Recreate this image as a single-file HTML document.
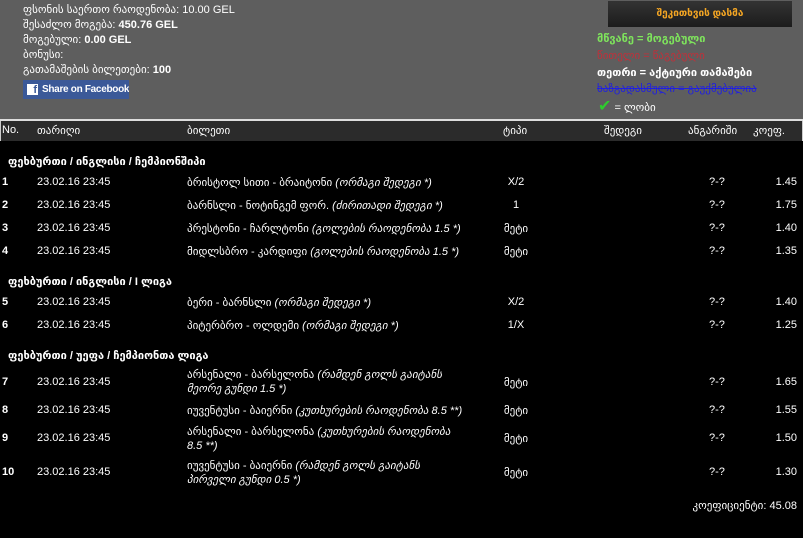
<!DOCTYPE html>
<html><head><meta charset="utf-8"><style>
*{margin:0;padding:0;box-sizing:border-box}
body{width:803px;height:538px;background:#000;color:#fff;font-family:"Liberation Sans","DejaVu Sans",sans-serif;font-size:11px;position:relative;overflow:hidden}
.top{position:absolute;left:0;top:0;width:803px;height:119px;background:#5e5e5e}
.a{position:absolute;white-space:nowrap}
.line{position:absolute;left:0;top:119px;width:803px;height:2px;background:#ddd}
.hdr{position:absolute;left:0;top:121px;width:803px;height:20px;background:#2b2b2b;border-left:1px solid #ccc;border-right:1px solid #ccc}
b{font-weight:bold}
i{font-style:italic}
.fb{position:absolute;left:23px;top:80px;width:106px;height:19px;background:#3b5998;color:#fff;font-weight:bold;font-size:10px;line-height:19px;padding-left:19px;white-space:nowrap;overflow:hidden;letter-spacing:-0.3px}
.fb span{position:absolute;left:4px;top:4px;width:11px;height:11px;background:#fff;color:#3b5998;font-size:11px;line-height:13px;text-align:right;padding-right:1px;font-weight:bold;letter-spacing:0}
.btn{position:absolute;left:608px;top:1px;width:184px;height:26px;background:linear-gradient(#333,#1c1c1c);color:#f5a623;font-weight:bold;font-size:10px;text-align:center;line-height:26px}
.r{position:absolute;font-size:11px;white-space:nowrap}
.n{font-weight:bold}
.c{text-align:center}
</style></head><body>
<div class="top"></div>
<div class="a" style="left:23px;top:3px">ფსონის საერთო რაოდენობა: 10.00 GEL</div>
<div class="a" style="left:23px;top:18px">შესაძლო მოგება: <b>450.76 GEL</b></div>
<div class="a" style="left:23px;top:33px">მოგებული: <b>0.00 GEL</b></div>
<div class="a" style="left:23px;top:48px">ბონუსი:</div>
<div class="a" style="left:23px;top:63px">გათამაშების ბილეთები: <b>100</b></div>
<div class="fb"><span>f</span>Share on Facebookl</div>
<div class="btn">შეკითხვის დასმა</div>
<div class="a" style="left:597px;top:32px;color:#7ee35c;font-weight:bold">მწვანე = მოგებული</div>
<div class="a" style="left:597px;top:49px;color:#c0303a">წითელი = წაგებული</div>
<div class="a" style="left:597px;top:66px;font-weight:bold">თეთრი = აქტიური თამაშები</div>
<div class="a" style="left:597px;top:82px;color:#2020e0;text-decoration:line-through">ხაზგადასმული = გაუქმებულია</div>
<div class="a" style="left:598px;top:96px"><span style="color:#2ecc2e;font-size:16px;font-weight:bold">✔</span> = ლობი</div>
<div class="line"></div>
<div class="hdr"></div>
<div class="a" style="left:2px;top:124px">No.</div>
<div class="a" style="left:37px;top:124px">თარიღი</div>
<div class="a" style="left:187px;top:124px">ბილეთი</div>
<div class="a" style="left:503px;top:124px">ტიპი</div>
<div class="a" style="left:604px;top:124px">შედეგი</div>
<div class="a" style="left:688px;top:124px">ანგარიში</div>
<div class="a" style="left:753px;top:124px">კოეფ.</div>

<div class="a" style="left:8px;top:155px;font-weight:bold">ფეხბურთი / ინგლისი / ჩემპიონშიპი</div>
<div class="a" style="left:8px;top:275px;font-weight:bold">ფეხბურთი / ინგლისი / I ლიგა</div>
<div class="a" style="left:8px;top:349px;font-weight:bold">ფეხბურთი / უეფა / ჩემპიონთა ლიგა</div>

<div class="r n" style="left:2px;top:176px">1</div><div class="r" style="left:37px;top:176px">23.02.16 23:45</div><div class="r" style="left:187px;top:176px">ბრისტოლ სითი - ბრაიტონი <i>(ორმაგი შედეგი *)</i></div><div class="r c" style="left:486px;width:60px;top:176px">X/2</div><div class="r" style="left:709px;top:176px">?-?</div><div class="r" style="right:6px;top:176px">1.45</div>
<div class="r n" style="left:2px;top:199px">2</div><div class="r" style="left:37px;top:199px">23.02.16 23:45</div><div class="r" style="left:187px;top:199px">ბარნსლი - ნოტინგემ ფორ. <i>(ძირითადი შედეგი *)</i></div><div class="r c" style="left:486px;width:60px;top:199px">1</div><div class="r" style="left:709px;top:199px">?-?</div><div class="r" style="right:6px;top:199px">1.75</div>
<div class="r n" style="left:2px;top:222px">3</div><div class="r" style="left:37px;top:222px">23.02.16 23:45</div><div class="r" style="left:187px;top:222px">პრესტონი - ჩარლტონი <i>(გოლების რაოდენობა 1.5 *)</i></div><div class="r c" style="left:486px;width:60px;top:222px">მეტი</div><div class="r" style="left:709px;top:222px">?-?</div><div class="r" style="right:6px;top:222px">1.40</div>
<div class="r n" style="left:2px;top:245px">4</div><div class="r" style="left:37px;top:245px">23.02.16 23:45</div><div class="r" style="left:187px;top:245px">მიდლსბრო - კარდიფი <i>(გოლების რაოდენობა 1.5 *)</i></div><div class="r c" style="left:486px;width:60px;top:245px">მეტი</div><div class="r" style="left:709px;top:245px">?-?</div><div class="r" style="right:6px;top:245px">1.35</div>
<div class="r n" style="left:2px;top:296px">5</div><div class="r" style="left:37px;top:296px">23.02.16 23:45</div><div class="r" style="left:187px;top:296px">ბერი - ბარნსლი <i>(ორმაგი შედეგი *)</i></div><div class="r c" style="left:486px;width:60px;top:296px">X/2</div><div class="r" style="left:709px;top:296px">?-?</div><div class="r" style="right:6px;top:296px">1.40</div>
<div class="r n" style="left:2px;top:319px">6</div><div class="r" style="left:37px;top:319px">23.02.16 23:45</div><div class="r" style="left:187px;top:319px">პიტერბრო - ოლდემი <i>(ორმაგი შედეგი *)</i></div><div class="r c" style="left:486px;width:60px;top:319px">1/X</div><div class="r" style="left:709px;top:319px">?-?</div><div class="r" style="right:6px;top:319px">1.25</div>
<div class="r n" style="left:2px;top:376px">7</div><div class="r" style="left:37px;top:376px">23.02.16 23:45</div><div class="r" style="left:187px;top:368px;width:275px;line-height:14px;white-space:normal">არსენალი - ბარსელონა <i>(რამდენ გოლს გაიტანს მეორე გუნდი 1.5 *)</i></div><div class="r c" style="left:486px;width:60px;top:376px">მეტი</div><div class="r" style="left:709px;top:376px">?-?</div><div class="r" style="right:6px;top:376px">1.65</div>
<div class="r n" style="left:2px;top:404px">8</div><div class="r" style="left:37px;top:404px">23.02.16 23:45</div><div class="r" style="left:187px;top:404px">იუვენტუსი - ბაიერნი <i>(კუთხურების რაოდენობა 8.5 **)</i></div><div class="r c" style="left:486px;width:60px;top:404px">მეტი</div><div class="r" style="left:709px;top:404px">?-?</div><div class="r" style="right:6px;top:404px">1.55</div>
<div class="r n" style="left:2px;top:432px">9</div><div class="r" style="left:37px;top:432px">23.02.16 23:45</div><div class="r" style="left:187px;top:425px;width:275px;line-height:14px;white-space:normal">არსენალი - ბარსელონა <i>(კუთხურების რაოდენობა 8.5 **)</i></div><div class="r c" style="left:486px;width:60px;top:432px">მეტი</div><div class="r" style="left:709px;top:432px">?-?</div><div class="r" style="right:6px;top:432px">1.50</div>
<div class="r n" style="left:2px;top:466px">10</div><div class="r" style="left:37px;top:466px">23.02.16 23:45</div><div class="r" style="left:187px;top:459px;width:275px;line-height:14px;white-space:normal">იუვენტუსი - ბაიერნი <i>(რამდენ გოლს გაიტანს პირველი გუნდი 0.5 *)</i></div><div class="r c" style="left:486px;width:60px;top:466px">მეტი</div><div class="r" style="left:709px;top:466px">?-?</div><div class="r" style="right:6px;top:466px">1.30</div>
<div class="r" style="right:6px;top:499px">კოეფიციენტი: 45.08</div>
</body></html>
